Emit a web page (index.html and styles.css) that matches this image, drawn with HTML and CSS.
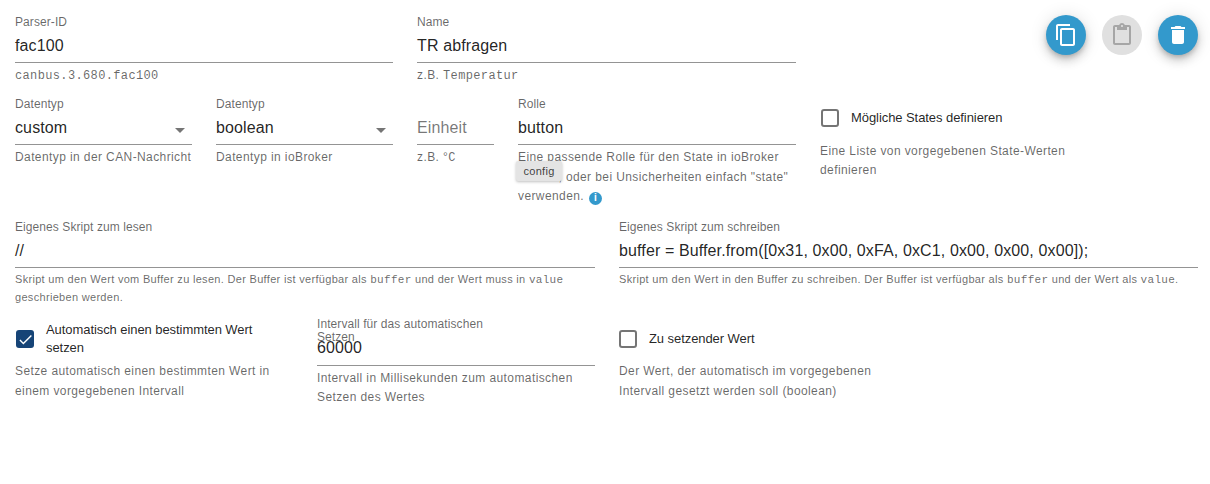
FILE: index.html
```html
<!DOCTYPE html>
<html lang="de">
<head>
<meta charset="utf-8">
<title>Parser</title>
<link rel="stylesheet" href="styles.css">
</head>
<body>
<main class="page">
  <section class="row row-top">
    <div class="field w378">
      <label class="label">Parser-ID</label>
      <div class="input">fac100</div>
      <p class="helper"><code>canbus.3.680.fac100</code></p>
    </div>
    <div class="field w379">
      <label class="label">Name</label>
      <div class="input">TR abfragen</div>
      <p class="helper">z.B. <code>Temperatur</code></p>
    </div>
    <div class="actions">
      <button class="fab" type="button" aria-label="Kopieren"><svg viewBox="0 0 24 24"><path d="M16 1H4c-1.100 0-2 .9-2 2v14h2V3h12V1zm3 4H8c-1.100 0-2 .9-2 2v14c0 1.100.9 2 2 2h11c1.100 0 2-.9 2-2V7c0-1.100-.9-2-2-2zm0 16H8V7h11v14z"/></svg></button>
      <button class="fab fab-off" type="button" aria-label="Einfügen"><svg viewBox="0 0 24 24"><path d="M19 2h-4.180C14.400.84 13.300 0 12 0c-1.300 0-2.400.84-2.820 2H5c-1.100 0-2 .9-2 2v16c0 1.100.9 2 2 2h14c1.100 0 2-.9 2-2V4c0-1.100-.9-2-2-2zm-7 0c.55 0 1 .45 1 1s-.45 1-1 1-1-.45-1-1 .45-1 1-1zm7 18H5V4h2v3h10V4h2v16z"/></svg></button>
      <button class="fab" type="button" aria-label="Löschen"><svg viewBox="0 0 24 24"><path d="M6 19c0 1.100.9 2 2 2h8c1.100 0 2-.9 2-2V7H6v12zM19 4h-3.500l-1-1h-5l-1 1H5v2h14V4z"/></svg></button>
    </div>
  </section>

  <section class="row row-types">
    <div class="field w177">
      <label class="label">Datentyp</label>
      <div class="input select">custom<span class="caret"></span></div>
      <p class="helper">Datentyp in der CAN-Nachricht</p>
    </div>
    <div class="field w177">
      <label class="label">Datentyp</label>
      <div class="input select">boolean<span class="caret"></span></div>
      <p class="helper">Datentyp in ioBroker</p>
    </div>
    <div class="field w77">
      <label class="label">&nbsp;</label>
      <div class="input placeholder">Einheit</div>
      <p class="helper">z.B. °<code>C</code></p>
    </div>
    <div class="field w278">
      <label class="label">Rolle</label>
      <div class="input">button</div>
      <p class="helper">Eine passende Rolle für den State in ioBroker wählen, oder bei Unsicherheiten einfach "state" verwenden. <span class="info">i</span></p>
      <span class="tooltip">config</span>
    </div>
    <div class="check-field w260">
      <div class="check-line">
        <span class="box"></span>
        <span class="check-text">Mögliche States definieren</span>
      </div>
      <p class="helper">Eine Liste von vorgegebenen State-Werten definieren</p>
    </div>
  </section>

  <section class="row row-scripts">
    <div class="field w580">
      <label class="label">Eigenes Skript zum lesen</label>
      <div class="input">//</div>
      <p class="helper small">Skript um den Wert vom Buffer zu lesen. Der Buffer ist verfügbar als <code>buffer</code> und der Wert muss in <code>value</code> geschrieben werden.</p>
    </div>
    <div class="field w579">
      <label class="label">Eigenes Skript zum schreiben</label>
      <div class="input">buffer = Buffer.from([0x31, 0x00, 0xFA, 0xC1, 0x00, 0x00, 0x00]);</div>
      <p class="helper small">Skript um den Wert in den Buffer zu schreiben. Der Buffer ist verfügbar als <code>buffer</code> und der Wert als <code>value</code>.</p>
    </div>
  </section>

  <section class="row row-auto">
    <div class="check-field w278 auto-field">
      <div class="check-line">
        <span class="box box-on"><svg viewBox="0 0 24 24"><path d="M9 16.200 4.800 12l-1.400 1.400L9 19 21 7l-1.400-1.400z"/></svg></span>
        <span class="check-text">Automatisch einen bestimmten Wert setzen</span>
      </div>
      <p class="helper">Setze automatisch einen bestimmten Wert in einem vorgegebenen Intervall</p>
    </div>
    <div class="field w278">
      <label class="label label-wrap">Intervall für das automatischen Setzen</label>
      <div class="input input-tight">60000</div>
      <p class="helper helper-tight">Intervall in Millisekunden zum automatischen Setzen des Wertes</p>
    </div>
    <div class="check-field w278 value-field">
      <div class="check-line">
        <span class="box"></span>
        <span class="check-text">Zu setzender Wert</span>
      </div>
      <p class="helper">Der Wert, der automatisch im vorgegebenen Intervall gesetzt werden soll (boolean)</p>
    </div>
  </section>
</main>
</body>
</html>
```
FILE: styles.css
```css
* { box-sizing: border-box; }
html, body { margin: 0; background: #fff; }
body { font-family: "Liberation Sans", Arial, sans-serif; color: rgba(0,0,0,.87); }
.page { width: 1210px; height: 484px; padding: 15px 12px 0 15px; overflow: hidden; }
.row { display: flex; gap: 24px; align-items: flex-start; }
.row-top { height: 82px; }
.row-scripts { margin-top: 13.5px; }
.row-auto { margin-top: 12px; }

.w77 { width: 77px; }
.w177 { width: 177px; }
.w260 { width: 260px; }
.w278 { width: 278px; }
.w378 { width: 378px; }
.w379 { width: 379px; }
.w580 { width: 580px; }
.w579 { width: 579px; }

.field { position: relative; flex: none; }
.label { display: block; font-size: 12px; line-height: 14px; letter-spacing: .08px; color: rgba(0,0,0,.6); }
.input {
  height: 34px; padding-top: 7px; font-size: 16px; line-height: 19px; letter-spacing: .12px;
  border-bottom: 1px solid rgba(0,0,0,.42);
  white-space: nowrap;
}
.select { position: relative; }
.caret {
  position: absolute; right: 7px; top: 17px; width: 0; height: 0;
  border-left: 5px solid transparent; border-right: 5px solid transparent;
  border-top: 5px solid rgba(0,0,0,.54);
}
.placeholder { color: rgba(0,0,0,.54); }
.helper {
  margin: 0; padding-top: 3px; font-size: 12px; line-height: 19.5px;
  letter-spacing: .4px; color: rgba(0,0,0,.6);
}
.helper.small { font-size: 11px; letter-spacing: .31px; line-height: 17px; padding-top: 3px; }
.helper-tight { line-height: 19px; }
code { font-family: "Liberation Mono", monospace; font-size: 1em; letter-spacing: .36px; }
.small code { letter-spacing: .3px; }

.info {
  display: inline-flex; width: 13px; height: 13px; margin-left: 1px; border-radius: 50%;
  align-items: center; justify-content: center; vertical-align: -1px;
  background: #3399cc; color: #fff; font-size: 10px; font-weight: 700; line-height: 1; letter-spacing: 0;
}
.tooltip {
  position: absolute; left: -2px; top: 64px; width: 46px; height: 20px;
  background: #e4e4e4; border-radius: 2px; box-shadow: 0 1px 3px rgba(0,0,0,.25);
  font-size: 11px; line-height: 20px; text-align: center; color: rgba(0,0,0,.75); letter-spacing: .3px;
}

.actions { margin-left: auto; display: flex; gap: 16px; }
.fab {
  width: 40px; height: 40px; padding: 0; border: 0; border-radius: 50%;
  background: #3399cc; display: flex; align-items: center; justify-content: center;
  box-shadow: 0 3px 5px -1px rgba(0,0,0,.2), 0 6px 10px 0 rgba(0,0,0,.14), 0 1px 18px 0 rgba(0,0,0,.12);
}
.fab svg { width: 24px; height: 24px; fill: #fff; }
.fab-off { background: #e0e0e0; box-shadow: none; }
.fab-off svg { fill: rgba(0,0,0,.26); }

.check-field { flex: none; }
.check-line { display: flex; align-items: center; gap: 12px; font-size: 13px; line-height: 18px; letter-spacing: -.07px; }
.box {
  flex: none; width: 18px; height: 18px; margin-left: 1px; border: 2px solid rgba(0,0,0,.54); border-radius: 3px;
  display: block;
}
.box-on { display: flex; align-items: center; justify-content: center; background: #164477; border: 0; }
.box-on svg { display: block; width: 17px; height: 17px; fill: #fff; }
.row-types .check-field { padding-top: 12px; }
.row-types .check-field .helper { margin-top: 12px; line-height: 19px; }
.auto-field { padding-top: 3px; }
.auto-field .helper { margin-top: 2px; }
.value-field { padding-top: 12px; }
.value-field .box { margin-left: 0; }
.value-field .helper { margin-top: 11px; }
.label-wrap { width: 180px; line-height: 13px; }
.input-tight { height: 22px; padding-top: 0; line-height: 7px; }
```
